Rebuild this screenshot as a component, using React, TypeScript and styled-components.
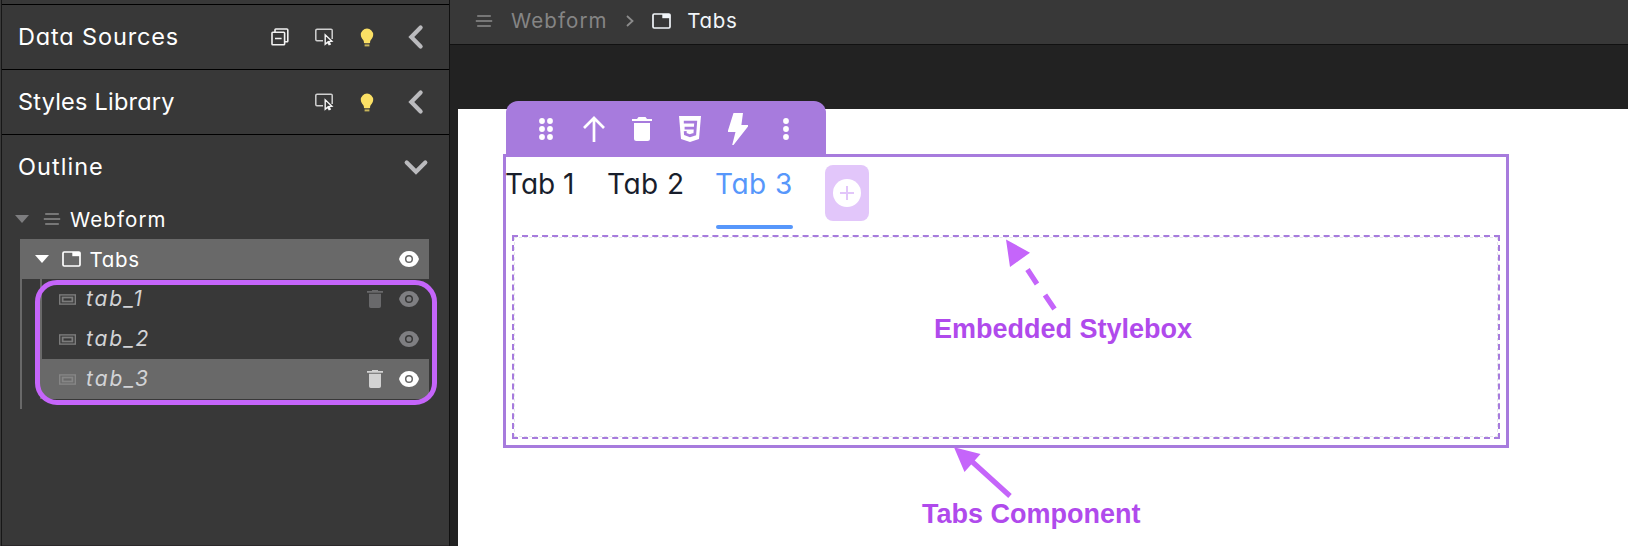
import React from 'react';
import styled, { createGlobalStyle } from 'styled-components';

const Global = createGlobalStyle`
  * { box-sizing: border-box; }
  body { margin: 0; background: #222; }
  svg { display: block; flex: none; overflow: visible; }
`;

const Page = styled.div`
  display: flex;
  width: 1628px;
  height: 546px;
  overflow: hidden;
  background: #222;
  font-family: Inter, "Open Sans", sans-serif;
  font-feature-settings: "cv11";
`;

/* ---------- sidebar ---------- */

const Sidebar = styled.aside`
  position: relative;
  display: flex;
  flex-direction: column;
  flex: none;
  width: 450px;
  border-left: 1px solid #393939;
  border-right: 1px solid #111;
  background: #383838;
  box-shadow: inset 1px 0 0 #171717, inset 0 -1px 0 #2b282a;
`;

const Section = styled.div<{ $last?: boolean }>`
  display: flex;
  align-items: center;
  flex: none;
  height: ${(p) => (p.$last ? 64 : 65)}px;
  margin-left: 1px;
  padding: 0 5px 0 16px;
  border-bottom: ${(p) => (p.$last ? 'none' : '1px solid #000')};
`;

const TopEdge = styled.div`
  flex: none;
  height: 5px;
  margin-left: 1px;
  border-bottom: 1px solid #000;
`;

const SectionTitle = styled.span<{ $track: number }>`
  flex: 1;
  padding-bottom: 2px;
  font-size: 23.5px;
  letter-spacing: ${(p) => p.$track}px;
  white-space: nowrap;
  color: #fff;
`;

const ActionSlot = styled.span<{ $w: number }>`
  display: flex;
  justify-content: center;
  width: ${(p) => p.$w}px;
`;

const Tree = styled.div`
  display: flex;
  flex-direction: column;
  margin-left: 20px;
`;

const RootRow = styled.div`
  display: flex;
  align-items: center;
  height: 40px;
  margin-left: -6px;
  color: #fff;
`;

const Branch = styled.div`
  width: 409px;
  height: 170px;
  margin-left: -1px;
  border-left: 2px solid #696969;
`;

const TreeRow = styled.div<{ $selected?: boolean; $indent: number }>`
  display: flex;
  align-items: center;
  height: 40px;
  padding: 0 10px 0 ${(p) => p.$indent}px;
  background: ${(p) => (p.$selected ? '#696969' : 'transparent')};
  color: #fff;
`;

const Leaves = styled.div`
  margin-left: 18px;
  border-left: 2px solid #696969;
  color: #d2d3d6;
`;

const RowLabel = styled.span<{ $track: number; $gap: number }>`
  margin-left: ${(p) => p.$gap}px;
  font-size: 20.5px;
  letter-spacing: ${(p) => p.$track}px;
  white-space: nowrap;
`;

const LeafLabel = styled(RowLabel)`
  padding-bottom: 1px;
  font-size: 21px;
  font-style: italic;
  color: #d2d3d6;
`;

const RowActions = styled.span`
  display: flex;
  align-items: center;
  gap: 16px;
  margin-left: auto;
`;

const Highlight = styled.div`
  position: absolute;
  left: 33.5px;
  top: 280px;
  width: 402px;
  height: 124.500px;
  border: 5px solid #c565fa;
  border-radius: 22px;
`;

/* ---------- workspace ---------- */

const Workspace = styled.main`
  display: flex;
  flex-direction: column;
  flex: 1;
`;

const Breadcrumb = styled.nav`
  display: flex;
  align-items: center;
  flex: none;
  height: 45px;
  padding: 0 0 3px 25px;
  border-bottom: 1px solid #111;
  background: #383838;
`;

const Crumb = styled.span<{ $active?: boolean; $track: number; $gap: number }>`
  margin-left: ${(p) => p.$gap}px;
  font-size: 20.5px;
  letter-spacing: ${(p) => p.$track}px;
  color: ${(p) => (p.$active ? '#f1f5f9' : '#858585')};
`;

const CrumbIcon = styled.span<{ $gap: number }>`
  margin-left: ${(p) => p.$gap}px;
`;

const Canvas = styled.div`
  position: relative;
  flex: 1;
  margin: 64px 0 0 8px;
  padding: 45px 0 0 45px;
  background: #fff;
`;

const Frame = styled.section`
  position: relative;
  width: 1006px;
  height: 294px;
  border: 3px solid #a77bdd;
`;

const Toolbar = styled.div`
  position: absolute;
  left: 0;
  top: -56px;
  display: flex;
  align-items: center;
  width: 320px;
  height: 56px;
  padding: 0 16px;
  border-radius: 12px 12px 0 0;
  background: #a77bdd;
`;

const Tool = styled.span`
  display: flex;
  justify-content: center;
  width: 48px;
`;

const TabList = styled.div`
  display: flex;
  gap: 32px;
  height: 72px;
`;

const Tab = styled.div<{ $w: number; $active?: boolean; $track: number }>`
  width: ${(p) => p.$w}px;
  padding-top: 6px;
  font-size: 28px;
  line-height: 42px;
  letter-spacing: ${(p) => p.$track}px;
  text-indent: -1px;
  white-space: nowrap;
  color: ${(p) => (p.$active ? '#5797fb' : '#181e2c')};
`;

const Underline = styled.div`
  height: 4px;
  margin-top: 20px;
  border-radius: 2px;
  background: #5797fb;
`;

const AddTab = styled.div`
  display: flex;
  align-items: center;
  justify-content: center;
  width: 44px;
  height: 56px;
  margin-top: 8px;
  border-radius: 8px;
  background: #e2c6fa;
`;

const Stylebox = styled.div`
  height: 204px;
  margin: 6px 6px 0;
  border: 2px dashed #a77bdd;
`;

const StyleboxInner = styled.div`
  height: 100%;
  border: 1px dashed #e5e7eb;
`;

const Note = styled.div<{ $x: number; $y: number }>`
  position: absolute;
  left: ${(p) => p.$x}px;
  top: ${(p) => p.$y}px;
  font: bold 27px/30px "Liberation Sans", Arial, sans-serif;
  white-space: nowrap;
  color: #b04aec;
`;

const Arrows = styled.svg`
  position: absolute;
  left: 0;
  top: 0;
`;

/* ---------- icons ---------- */

const Collapse = () => (
  <svg width="18" height="18" viewBox="0 0 18 18" fill="none" stroke="#f2f2f2" strokeWidth="1.6">
    <rect x="1" y="4.2" width="12.6" height="12.6" rx="0.8" />
    <path d="M4 4V1.8a.8.8 0 0 1 .8-.8h11a1 1 0 0 1 1 1v11a.8.8 0 0 1-.8.8h-2.200M4 10.500h6.600" />
  </svg>
);

const Picker = () => (
  <svg width="18" height="18" viewBox="0 0 18 18" fill="none">
    <path d="M8 12.700H2a1.200 1.200 0 0 1-1.200-1.200V2.400A1.200 1.200 0 0 1 2 1.200h14a1.200 1.200 0 0 1 1.200 1.200V11" stroke="#d0d0d0" strokeWidth="1.500" />
    <path d="M10.200 6.800v9.400l2.500-2.100 1.400 2.600 1.100-.5-1.300-2.700 3-.3z" stroke="#f5f5f5" strokeWidth="1.400" />
  </svg>
);

const Bulb = () => (
  <svg width="14" height="19" viewBox="0 0 14 19">
    <path d="M7 .6a6.200 6.200 0 0 0-6.200 6.200c0 2.200 1.100 3.600 2.200 4.900.5.6.9 1.300.9 2.100v.7c0 .5.3.8.8.8h4.600c.5 0 .8-.3.8-.8v-.7c0-.8.4-1.500.9-2.100 1.100-1.300 2.200-2.700 2.200-4.900A6.200 6.200 0 0 0 7 .6z" fill="#fbe065" />
    <path d="M4.600 17.400h4.800" stroke="#c9b65a" strokeWidth="2" />
  </svg>
);

const Chevron = ({ down }: { down?: boolean }) => (
  <svg width="24" height="24" viewBox="0 0 24 24" fill="none" stroke="#bababd" strokeWidth="4.200" strokeLinecap="round">
    <path d={down ? 'M2.700 7.500l9.300 9.200 9.300-9.200' : 'M16.600 2.600L7.300 12l9.300 9.400'} />
  </svg>
);

const Caret = ({ color }: { color: string }) => (
  <svg width="14" height="8" viewBox="0 0 14 8">
    <path d="M0 0h14L7 8z" fill={color} />
  </svg>
);

const Menu = () => (
  <svg width="18" height="14" viewBox="0 0 18 14" stroke="#777" strokeWidth="1.8">
    <path d="M2.200 2h13.600M.8 7h16.400M2.200 12h13.600" />
  </svg>
);

const TabIcon = ({ color }: { color: string }) => (
  <svg width="19" height="16" viewBox="0 0 19 16">
    <rect x="1" y="1" width="17" height="14" rx="1.200" fill="none" stroke={color} strokeWidth="1.700" />
    <path d="M10.300 1h7.900v4.200h-7.900z" fill={color} />
  </svg>
);

const BoxIcon = ({ dim }: { dim?: boolean }) => (
  <svg width="17" height="11" viewBox="0 0 17 11" fill="none" stroke={dim ? '#868686' : '#7c7c7c'}>
    <rect x=".7" y=".9" width="15.600" height="9.200" strokeWidth="1.400" />
    <rect x="3.600" y="3.500" width="9.800" height="4" strokeWidth="1.800" />
  </svg>
);

const Eye = ({ color, hole }: { color: string; hole: string }) => (
  <svg width="20" height="16" viewBox="0 0 20 16">
    <path d="M10 0C5.200 0 1.500 3 0 8c1.500 5 5.200 8 10 8s8.500-3 10-8c-1.500-5-5.200-8-10-8z" fill={color} />
    <circle cx="10" cy="8" r="3.300" fill="none" stroke={hole} strokeWidth="1.500" />
  </svg>
);

const Bin = ({ color }: { color: string }) => (
  <svg width="16" height="18" viewBox="0 0 16 18" fill={color}>
    <path d="M5 0h6v1h5v1.800H0V1h5zM2 3.800h12v12.400a1.800 1.800 0 0 1-1.800 1.800H3.800A1.800 1.800 0 0 1 2 16.200z" />
  </svg>
);

const Dots = ({ columns }: { columns: number[] }) => (
  <svg width="16" height="24" viewBox="0 0 16 24" fill="#fff">
    {columns.map((x) => [4, 12, 20].map((y) => <circle key={`${x}-${y}`} cx={x} cy={y} r="2.900" />))}
  </svg>
);

const ArrowUp = () => (
  <svg width="24" height="26" viewBox="0 0 24 26" fill="none" stroke="#fff" strokeWidth="2.700">
    <path d="M12 26V2M2 12L12 2l10 10" />
  </svg>
);

const ToolBin = () => (
  <svg width="20" height="24" viewBox="0 0 20 24" fill="#fff">
    <path d="M6.500 0h7l1.500 2h5v2H0V2h5zM2 6h16v15.500a2.500 2.500 0 0 1-2.500 2.500h-11A2.500 2.500 0 0 1 2 21.500z" />
  </svg>
);

const Css3 = () => (
  <svg width="22" height="26" viewBox="0 0 22 26">
    <path d="M0 0h22l-2 23-9 3-9-3z" fill="#fff" />
    <path d="M4.800 6.200h11.900l-.9 11.900-4.800 1.600-4.600-1.600-.2-2.900M5.600 12.100h10" fill="none" stroke="#a77bdd" strokeWidth="2.800" />
  </svg>
);

const Bolt = () => (
  <svg width="20" height="32" viewBox="0 0 20 32">
    <path d="M5.500 0H15l-1.600 12H20v1.500L5.500 32H4.200L7.500 19H0v-1.500z" fill="#fff" />
  </svg>
);

const Plus = () => (
  <svg width="28" height="28" viewBox="0 0 28 28">
    <circle cx="14" cy="14" r="14" fill="#fff" />
    <path d="M7 14h14M14 7v14" stroke="#e2c6fa" strokeWidth="2" />
  </svg>
);

const Next = () => (
  <svg width="8" height="12" viewBox="0 0 8 12" fill="none" stroke="#8c8c8c" strokeWidth="1.800">
    <path d="M1 1l5.500 5L1 11" />
  </svg>
);

const DIM = '#7f7f82';

export default function App() {
  return (
    <>
      <Global />
      <Page>
        <Sidebar>
          <TopEdge />
          <Section>
            <SectionTitle $track={0.85}>Data Sources</SectionTitle>
            <ActionSlot $w={44}><Collapse /></ActionSlot>
            <ActionSlot $w={44}><Picker /></ActionSlot>
            <ActionSlot $w={42}><Bulb /></ActionSlot>
            <ActionSlot $w={56}><Chevron /></ActionSlot>
          </Section>
          <Section>
            <SectionTitle $track={0.22}>Styles Library</SectionTitle>
            <ActionSlot $w={44}><Picker /></ActionSlot>
            <ActionSlot $w={42}><Bulb /></ActionSlot>
            <ActionSlot $w={56}><Chevron /></ActionSlot>
          </Section>
          <Section $last>
            <SectionTitle $track={1.05}>Outline</SectionTitle>
            <ActionSlot $w={56}><Chevron down /></ActionSlot>
          </Section>
          <Tree>
            <RootRow>
              <Caret color="#7d7d7f" />
              <CrumbIcon $gap={14}><Menu /></CrumbIcon>
              <RowLabel $gap={9} $track={1.1}>Webform</RowLabel>
            </RootRow>
            <Branch>
              <TreeRow $selected $indent={13}>
                <Caret color="#fff" />
                <CrumbIcon $gap={13}><TabIcon color="#fff" /></CrumbIcon>
                <RowLabel $gap={8.5} $track={0.7}>Tabs</RowLabel>
                <RowActions><Eye color="#fff" hole="#696969" /></RowActions>
              </TreeRow>
              <Leaves>
                <TreeRow $indent={17}>
                  <BoxIcon />
                  <LeafLabel $gap={10} $track={1.9}>tab_1</LeafLabel>
                  <RowActions><Bin color="#69696b" /><Eye color={DIM} hole="#383838" /></RowActions>
                </TreeRow>
                <TreeRow $indent={17}>
                  <BoxIcon />
                  <LeafLabel $gap={10} $track={1.9}>tab_2</LeafLabel>
                  <RowActions><Eye color={DIM} hole="#383838" /></RowActions>
                </TreeRow>
                <TreeRow $selected $indent={17}>
                  <BoxIcon dim />
                  <LeafLabel $gap={10} $track={2}>tab_3</LeafLabel>
                  <RowActions><Bin color="#d2d2d2" /><Eye color="#fff" hole="#696969" /></RowActions>
                </TreeRow>
              </Leaves>
            </Branch>
          </Tree>
          <Highlight />
        </Sidebar>
        <Workspace>
          <Breadcrumb>
            <Menu />
            <Crumb $gap={18} $track={1.1}>Webform</Crumb>
            <CrumbIcon $gap={18}><Next /></CrumbIcon>
            <CrumbIcon $gap={18}><TabIcon color="#f1f5f9" /></CrumbIcon>
            <Crumb $active $gap={16.5} $track={0.7}>Tabs</Crumb>
          </Breadcrumb>
          <Canvas>
            <Frame>
              <TabList>
                <Tab $w={70} $track={0}>Tab 1</Tab>
                <Tab $w={76} $track={0.5}>Tab 2</Tab>
                <Tab $w={77} $active $track={0.5}>Tab 3<Underline /></Tab>
                <AddTab><Plus /></AddTab>
              </TabList>
              <Stylebox><StyleboxInner /></Stylebox>
              <Toolbar>
                <Tool><Dots columns={[4, 12]} /></Tool>
                <Tool><ArrowUp /></Tool>
                <Tool><ToolBin /></Tool>
                <Tool><Css3 /></Tool>
                <Tool><Bolt /></Tool>
                <Tool><Dots columns={[8]} /></Tool>
              </Toolbar>
            </Frame>
            <Arrows width="1170" height="437" viewBox="458 109 1170 437">
              <path d="M1006 239.500l24 13.200-20 14.300zM954 447.200l26.500 6.800-16 18z" fill="#c565fa" />
              <path d="M1027.500 269.500l9.500 14.500M1045 295l9.500 14M972.500 462l37.500 34" stroke="#c565fa" strokeWidth="5.200" />
            </Arrows>
            <Note $x={476} $y={205}>Embedded Stylebox</Note>
            <Note $x={464} $y={390}>Tabs Component</Note>
          </Canvas>
        </Workspace>
      </Page>
    </>
  );
}
